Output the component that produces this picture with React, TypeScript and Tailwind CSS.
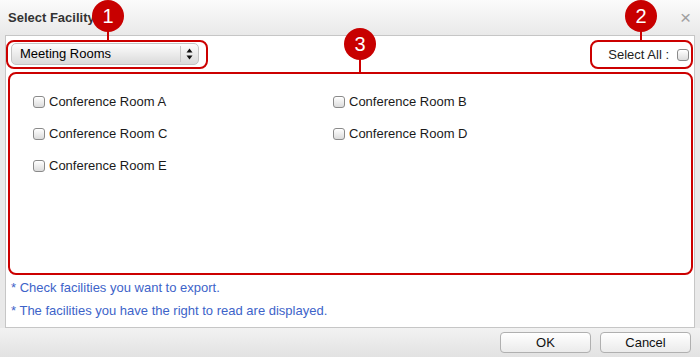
import React from "react";

const Check = () => (
  <span className="inline-block w-[12px] h-[12px] rounded-[3px] border border-[#8a8a8a] bg-gradient-to-b from-white to-[#dcdcdc] shadow-[inset_0_1px_0_#fff]" />
);

const Badge = ({ n, cls }: { n: string; cls: string }) => (
  <div className={"absolute flex flex-col items-center " + cls}>
    <div className="w-[32px] h-[32px] rounded-full bg-[#c80000] text-white flex items-center justify-center text-[20px] leading-none font-['Liberation_Sans',sans-serif]">
      {n}
    </div>
  </div>
);

export default function App() {
  const rooms = [
    "Conference Room A",
    "Conference Room B",
    "Conference Room C",
    "Conference Room D",
    "Conference Room E",
  ];
  return (
    <div className="relative w-[700px] h-[357px] overflow-hidden bg-[#e9e9e9] font-['Liberation_Sans',Arial,sans-serif] text-[#222]">
      {/* title bar */}
      <div className="h-[35px] flex items-center justify-between pl-[8px] pr-[9px] bg-gradient-to-b from-[#fbfbfb] to-[#e9e9e9]">
        <span className="text-[13px] font-bold text-[#333]">Select Facility</span>
        <span className="text-[19px] text-[#a0a0a0] leading-none">×</span>
      </div>
      {/* panel */}
      <div className="mx-[5px] h-[293px] border border-[#c6c6c6] bg-white pt-[4px] flex flex-col">
        <div className="flex justify-between pr-[1px]">
          <div className="w-[202px] h-[29px] border-2 border-[#cc0000] rounded-[8px] pl-[3px] pt-[1px]">
            <div className="w-[188px] h-[22px] rounded-[5px] border border-[#c4c4c4] bg-gradient-to-b from-[#fdfdfd] to-[#dadada] flex items-center text-[13px] text-black">
              <span className="pl-[8px] flex-1">Meeting Rooms</span>
              <span className="w-[1px] h-[16px] bg-[#c8c8c8]" />
              <span className="w-[17px] flex flex-col items-center justify-center gap-[1px]">
                <svg width="7" height="12" viewBox="0 0 7 12">
                  <path d="M3.5 0.5 L6.5 4.5 L0.5 4.5 Z" fill="#111" />
                  <path d="M3.5 11.5 L6.5 7.5 L0.5 7.5 Z" fill="#111" />
                </svg>
              </span>
            </div>
          </div>
          <div className="w-[103px] h-[29px] border-2 border-[#cc0000] rounded-[8px] flex items-center justify-end pr-[2px] gap-[8px] text-[13px] text-[#222]">
            <span>Select All :</span>
            <Check />
          </div>
        </div>
        <div className="mt-[3px] ml-[2px] w-[685px] h-[203px] border-2 border-[#cc0000] rounded-[8px] pl-[23px] pt-[12px]">
          <div className="grid grid-cols-[300px_300px] auto-rows-[32px]">
            {rooms.map((r) => (
              <label key={r} className="flex items-center gap-[4px] h-[32px] text-[13px] text-[#1a1a1a]">
                <Check />
                <span>{r}</span>
              </label>
            ))}
          </div>
        </div>
        <div className="pl-[5px] pt-[4px] text-[13px] leading-[17px] text-[#3d63c9] flex flex-col gap-[6px]">
          <div>* Check facilities you want to export.</div>
          <div>* The facilities you have the right to read are displayed.</div>
        </div>
      </div>
      {/* bottom bar */}
      <div className="h-[29px] flex items-center justify-end gap-[9px] pr-[9px] bg-gradient-to-b from-[#f2f2f2] to-[#e2e2e2]">
        <button className="w-[91px] h-[21px] rounded-[4px] border border-[#b0b0b0] bg-gradient-to-b from-white to-[#ebebeb] text-[13px] text-[#111]">
          OK
        </button>
        <button className="w-[91px] h-[21px] rounded-[4px] border border-[#b0b0b0] bg-gradient-to-b from-white to-[#ebebeb] text-[13px] text-[#111]">
          Cancel
        </button>
      </div>
      {/* annotations */}
      <div className="absolute left-[107px] top-[30px] w-[2px] h-[11px] bg-[#cc0000]" />
      <div className="absolute left-[640px] top-[30px] w-[2px] h-[11px] bg-[#cc0000]" />
      <div className="absolute left-[359px] top-[55px] w-[2px] h-[18px] bg-[#cc0000]" />
      <Badge n="1" cls="left-[92px] top-[0px]" />
      <Badge n="2" cls="left-[625px] top-[0px]" />
      <Badge n="3" cls="left-[344px] top-[28px]" />
    </div>
  );
}
